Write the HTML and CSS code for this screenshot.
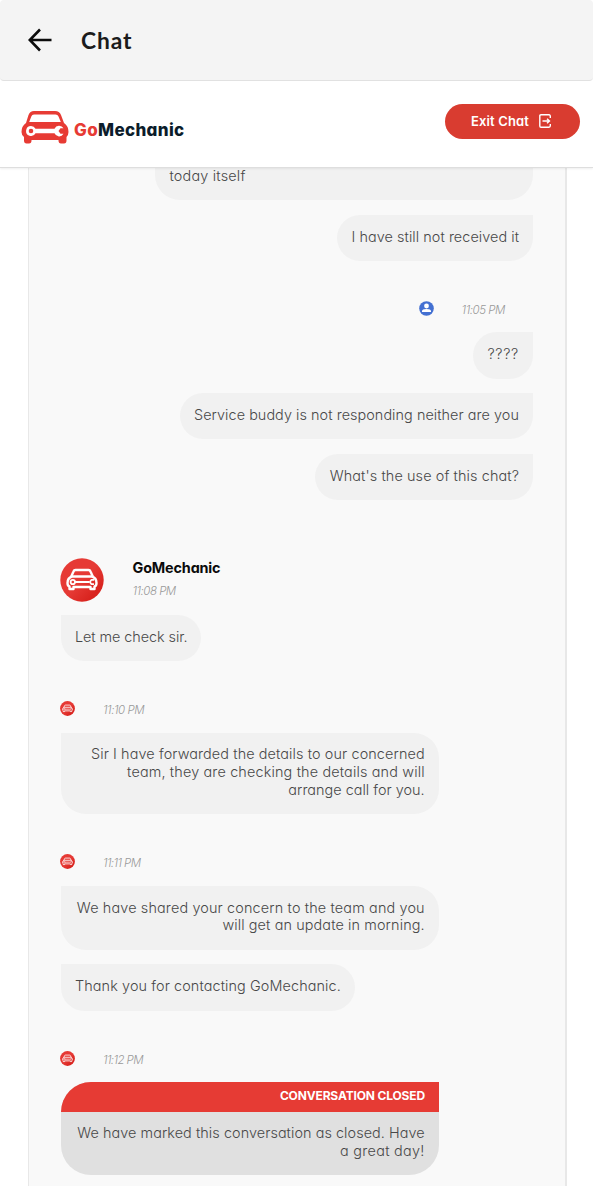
FILE: index.html
```html
<!DOCTYPE html>
<html lang="en">
<head>
<meta charset="utf-8">
<title>Chat</title>
<link rel="stylesheet" href="styles.css">
</head>
<body>
<svg class="defs" aria-hidden="true">
  <defs>
    <linearGradient id="badge" x1="0" y1="0" x2="1" y2="1"><stop offset=".5" stop-color="#e63a35"/><stop offset=".8" stop-color="#d9241f"/></linearGradient>
    <symbol id="car" viewBox="0 0 48 33">
      <path fill="currentColor" fill-rule="evenodd" d="M13 0H34Q38.500 0 40 4L43 12Q47.500 15 47.500 21Q47.500 24 45.500 26V29.500Q45.500 32.500 43 32.500H40Q37.500 32.500 37.500 29.500V29H10.500V29.500Q10.500 32.500 8 32.500H5.500Q3 32.500 3 29.500V26Q.5 24 .5 21Q.5 15 5 12L7.500 4Q9 0 13 0ZM13 3.500Q11 3.500 10.300 5.500L8.200 11H39.800L37.500 5.500Q36.700 3.500 34.500 3.500Z"/>
      <path fill="#fff" fill-rule="evenodd" d="M10 15A5 5 0 0 1 14.500 17.800H33.500A5 5 0 0 1 42.500 17.300H39.500L37.500 20L39.500 22.800H42.500A5 5 0 0 1 33.500 22.300H14.500A5 5 0 1 1 10 15ZM10 17.700A2.300 2.300 0 1 0 10 22.300A2.300 2.300 0 0 0 10 17.700Z"/>
    </symbol>
    <symbol id="agent" viewBox="0 0 44 44">
      <circle cx="22" cy="22" r="21.700" fill="url(#badge)"/>
      <g fill="none" stroke="#fff" stroke-width="2.400" stroke-linejoin="round">
        <path d="M11 19L13.500 13.500Q14 12 15.500 12H28.500Q30 12 30.500 13.500L33 19"/>
        <path d="M12 18.500H32Q36.500 20 36.500 25Q36.500 28 34.500 28.500V31H30.500V29H13.500V31H9.500V28.500Q7.500 28 7.500 25Q7.500 20 12 18.500Z"/>
        <path d="M15 24H29" stroke-width="2"/>
        <circle cx="12.800" cy="24" r="2.200" stroke-width="1.800"/>
        <path d="M34 21.800H31.500L29.800 24L31.500 26.200H34" stroke-width="1.800"/>
      </g>
    </symbol>
  </defs>
</svg>
<header class="appbar">
  <svg class="back" viewBox="0 0 24 24"><path d="M23.500 12H2M12 1.500L1.800 12L12 22.500"/></svg>
  <h1 class="title">Chat</h1>
</header>
<div class="brandbar">
  <div class="brand"><svg class="logo"><use href="#car"/></svg><span class="wordmark"><span class="go">Go</span>Mechanic</span></div>
  <button class="exit"><span>Exit Chat</span><svg class="exit-icon" viewBox="0 0 12 14"><path d="M11.300 4V2.200Q11.300.8 10 .8H2Q.8.8.8 2V12Q.8 13.200 2 13.200H10Q11.300 13.200 11.300 11.800V10M3.500 7H10.500M8 4.700L10.500 7L8 9.300"/></svg></button>
</div>
<main class="panel">
  <div class="bubble mine cut"><span class="l1">today itself</span></div>
  <div class="bubble mine"><span class="l2">I have still not received it</span></div>
  <div class="meta right"><svg class="dot" viewBox="0 0 15 15"><circle cx="7.500" cy="7.500" r="7.300" fill="#4370d2"/><circle cx="7.500" cy="5" r="2.400" fill="#fff"/><path d="M3 11V10Q3 8 7.500 8T12 10V11Z" fill="#fff"/></svg><time class="t1">11:05 PM</time></div>
  <div class="bubble mine"><span class="l3">????</span></div>
  <div class="bubble mine"><span class="l4">Service buddy is not responding neither are you</span></div>
  <div class="bubble mine"><span class="l5">What's the use of this chat?</span></div>
  <div class="sender"><svg class="avatar"><use href="#agent"/></svg><div class="who"><strong class="name">GoMechanic</strong><time class="t2">11:08 PM</time></div></div>
  <div class="bubble theirs"><span class="l6">Let me check sir.</span></div>
  <div class="meta"><svg class="dot"><use href="#agent"/></svg><time class="t3">11:10 PM</time></div>
  <div class="bubble theirs wide"><span class="l7">Sir I have forwarded the details to our concerned</span><span class="l8">team, they are checking the details and will</span><span class="l9">arrange call for you.</span></div>
  <div class="meta"><svg class="dot"><use href="#agent"/></svg><time class="t4">11:11 PM</time></div>
  <div class="bubble theirs wide"><span class="l10">We have shared your concern to the team and you</span><span class="l11">will get an update in morning.</span></div>
  <div class="bubble theirs"><span class="l12">Thank you for contacting GoMechanic.</span></div>
  <div class="meta"><svg class="dot"><use href="#agent"/></svg><time class="t5">11:12 PM</time></div>
  <section class="closed"><h2 class="closed-title">CONVERSATION CLOSED</h2><div class="closed-body"><span class="l13">We have marked this conversation as closed. Have</span><span class="l14">a great day!</span></div></section>
</main>
</body>
</html>
```

FILE: styles.css
```css
* { box-sizing: border-box; }
body { margin: 0; height: 1200px; overflow: hidden; background: #fff; font-family: Inter, "Open Sans", sans-serif; font-feature-settings: "cv11"; color: #484848; }
.defs { position: absolute; width: 0; height: 0; }
.appbar { height: 81px; padding: 0 28px; display: flex; align-items: center; gap: 29px; background: #f4f4f4; border-bottom: 1px solid #e2e2e2; border-radius: 4px 4px 4px 4px; }
.back { width: 24px; height: 24px; fill: none; stroke: #0c0c0c; stroke-width: 2.6; }
.title { margin: 0; font-family: Lato, sans-serif; font-size: 22.800px; letter-spacing: 0.9px; line-height: 28px; padding-bottom: 1px; font-weight: 700; color: #1b1b1b; }
.brandbar { height: 87px; padding: 0 13px 0 21px; display: flex; justify-content: space-between; border-bottom: 1px solid #dedede; box-shadow: 0 1px 2px #0001; position: relative; background: #fff; }
.brand { display: flex; align-items: flex-start; gap: 5px; padding-top: 30px; }
.logo { width: 48px; height: 33px; color: #e73b34; }
.wordmark { margin-top: 8px; font-size: 17px; line-height: 22px; font-weight: 800; letter-spacing: 0.35px; color: #0b1c2b; white-space: nowrap; }
.go { color: #e73b34; }
.exit { margin-top: 23px; width: 135px; height: 35px; padding: 0 3px 2px 0; border: 0; border-radius: 18px; background: #d93c30; color: #fff; display: flex; align-items: center; justify-content: center; gap: 10px; font: 600 13px Inter, sans-serif; font-feature-settings: "cv11"; letter-spacing: 0.15px; white-space: nowrap; }
.exit-icon { width: 12px; height: 14px; margin-top: 1px; fill: none; stroke: #fff; stroke-width: 1.4; }
.panel { height: 1018px; margin: 0 26px 0 28px; padding: 0 32px 0 31.500px; display: flex; flex-direction: column; align-items: flex-start; background: #f9f9f9; border-left: 1px solid #e8e8e8; border-right: 2px solid #e8e8e8; }
.bubble { flex: none; min-height: 46.200px; padding: 13px 14px 15px 14.500px; background: #f1f1f1; margin-bottom: 14.500px; display: flex; flex-direction: column; font-size: 14.400px; line-height: 17.600px; font-weight: 300; white-space: nowrap; }
.mine { align-self: flex-end; border-radius: 25px 0 25px 25px; }
.theirs { border-radius: 0 25px 25px 25px; }
.cut { width: 378px; min-height: 32px; height: 32px; padding-top: 0; border-radius: 0 0 25px 25px; }
.cut span { margin-top: -1px; }
.wide { width: 378.500px; align-items: flex-end; padding: 12.700px 14.300px 16px; }
.meta { flex: none; height: 71.800px; margin-top: -14.500px; padding-top: 40px; display: flex; align-items: flex-start; gap: 28px; }
.right { align-self: flex-end; padding-right: 28px; }
.dot { width: 15px; height: 15px; margin-left: -0.5px; }
time { font-size: 11.500px; line-height: 16px; font-weight: 300; font-style: italic; color: #999; padding-top: 1px; white-space: nowrap; }
.sender { flex: none; height: 57px; margin-top: 43.200px; display: flex; gap: 28.500px; }
.avatar { width: 44px; height: 44px; margin-left: -0.5px; }
.who { display: flex; flex-direction: column; gap: 5px; }
.name { font-size: 14.400px; line-height: 19px; font-weight: 700; letter-spacing: -0.15px; color: #0b0b0b; }
.closed { flex: none; width: 378.500px; height: 93px; border-radius: 30px 0 30px 30px; overflow: hidden; background: #e0e0e0; }
.closed-title { margin: 0; height: 30px; padding-right: 14px; background: #e63b34; color: #fff; font-size: 12px; line-height: 27px; font-weight: 700; letter-spacing: -0.15px; text-align: right; }
.closed-body { padding: 12px 14.300px 0; display: flex; flex-direction: column; align-items: flex-end; font-size: 14.400px; line-height: 17.600px; font-weight: 300; white-space: nowrap; }

/* Per-line tracking */
.t1, .t3 { letter-spacing: -0.45px; }
.t2 { letter-spacing: -0.5px; }
.t4, .t5 { letter-spacing: -0.6px; }
.l1 { letter-spacing: 0.2px; }
.l2, .l4 { letter-spacing: 0.060px; }
.l3 { letter-spacing: 0.7px; }
.l5, .l7, .l12 { letter-spacing: 0.11px; }
.l6 { letter-spacing: -0.060px; }
.l8 { letter-spacing: 0.16px; }
.l9 { letter-spacing: 0.030px; }
.l10 { letter-spacing: 0.15px; }
.l11 { letter-spacing: 0.12px; }
.l13 { letter-spacing: 0.070px; }
.l14 { letter-spacing: 0.3px; }
```
